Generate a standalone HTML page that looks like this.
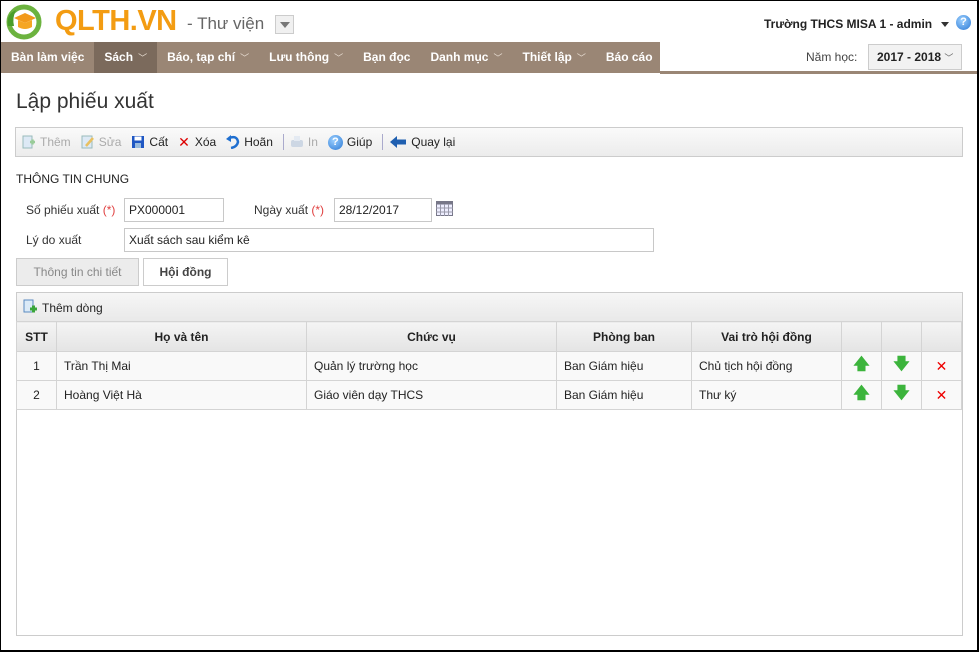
<!DOCTYPE html>
<html><head><meta charset="utf-8">
<style>
*{box-sizing:border-box;margin:0;padding:0}
body{width:979px;height:652px;overflow:hidden;font-family:"Liberation Sans","DejaVu Sans",sans-serif;font-size:12px;color:#222;background:#fff;position:relative}
.frame{position:absolute;left:0;top:0;width:979px;height:652px;border:1px solid #000;border-right:2px solid #000;border-bottom:2px solid #000;pointer-events:none}
.abs{position:absolute}
.nav{position:absolute;left:1px;top:42px;width:659px;height:31px;background:#9a8675;display:flex}
.nav div{color:#fff;font-weight:bold;font-size:12px;line-height:31px;padding:0 10px;white-space:nowrap}
.nav .act{background:#7b6a5c}
.nav span{font-weight:normal;font-size:9px;margin-left:5px;color:#e8ddd2}
.tb{position:absolute;left:15px;top:127px;width:948px;height:30px;border:1px solid #ccc;background:linear-gradient(#fafafa,#ececec);display:flex;align-items:center;padding-left:6px}
.tb .b{display:flex;align-items:center;margin-right:10px;font-size:12px}
.tb .dis{color:#aaa}
.ic{width:14px;height:14px;margin-right:4px;display:inline-block}
.sep{width:1px;height:16px;background:#aac;margin-right:6px}
input{font-family:inherit}
.inp{position:absolute;height:24px;border:1px solid #c8c8c8;padding-left:4px;line-height:22px;font-size:12px}
.lbl{position:absolute;font-size:12px;color:#333}
.req{color:#e04040}
table{border-collapse:collapse;position:absolute;left:16px;top:321px;width:946px}
td,th{border:1px solid #d4d4d4;height:29px;font-size:12px;padding:0 7px}
th{background:linear-gradient(#f4f4f4,#e4e4e4);font-weight:bold;text-align:center;height:30px}
td{background:#f9f9f9}
</style></head><body>
<!-- logo -->
<svg class="abs" style="left:4px;top:4px" width="46" height="36" viewBox="0 0 46 36">
<circle cx="20" cy="18" r="15" fill="none" stroke="#6cb33f" stroke-width="5"/>
<path d="M4 22 Q2 10 12 6 Q8 14 10 22Z" fill="#4a9e2a"/>
<path d="M10 14 L21 9 L32 14 L21 19Z" fill="#f29a1a"/>
<path d="M14 16 V23 Q21 27 28 23 V16 L21 19Z" fill="#f5a623"/>
</svg>
<div class="abs" style="left:55px;top:5px;font-size:29px;font-weight:bold;color:#f39c12;letter-spacing:-0.5px">QLTH.VN</div>
<div class="abs" style="left:187px;top:14px;font-size:17px;color:#666">- Thư viện</div>
<div class="abs" style="left:275px;top:15px;width:19px;height:19px;border:1px solid #ccc;background:#f0f0f0"><div style="margin:6px 0 0 4px;width:0;height:0;border-left:5px solid transparent;border-right:5px solid transparent;border-top:6px solid #777"></div></div>
<div class="abs" style="left:764px;top:17px;font-size:12px;font-weight:bold;color:#222">Trường THCS MISA 1 - admin</div>
<div class="abs" style="left:941px;top:22px;width:0;height:0;border-left:4px solid transparent;border-right:4px solid transparent;border-top:5px solid #333"></div>
<div class="abs" style="left:956px;top:15px;width:15px;height:15px;border-radius:50%;background:radial-gradient(circle at 40% 35%,#9cd0ff,#2a78d4);color:#fff;font-size:11px;font-weight:bold;text-align:center;line-height:15px">?</div>
<div class="nav">
<div>Bàn làm việc</div><div class="act">Sách<span>﹀</span></div><div>Báo, tạp chí<span>﹀</span></div><div>Lưu thông<span>﹀</span></div><div>Bạn đọc</div><div>Danh mục<span>﹀</span></div><div>Thiết lập<span>﹀</span></div><div>Báo cáo</div>
</div>
<div class="abs" style="left:660px;top:71px;width:318px;height:3px;background:#9a8675"></div>
<div class="abs" style="left:806px;top:50px;font-size:12px;color:#444">Năm học:</div>
<div class="abs" style="left:868px;top:44px;width:94px;height:26px;border:1px solid #ccc;background:#f2f2f2;font-weight:bold;font-size:12px;line-height:24px;padding-left:8px">2017 - 2018 <span style="font-weight:normal;font-size:9px;color:#666">﹀</span></div>

<div class="abs" style="left:16px;top:90px;font-size:21px;color:#333">Lập phiếu xuất</div>

<div class="tb">
<div class="b dis"><svg class="ic" viewBox="0 0 14 14"><rect x="1" y="1" width="9" height="12" fill="#dde9f5" stroke="#9bb"/><path d="M8 7h5M10.5 4.5v5" stroke="#9c9" stroke-width="2.5"/></svg>Thêm</div>
<div class="b dis"><svg class="ic" viewBox="0 0 14 14"><rect x="1" y="1" width="10" height="12" fill="#dde9f5" stroke="#9bb"/><path d="M5 11 L12 3" stroke="#e8c060" stroke-width="2.5"/></svg>Sửa</div>
<div class="b"><svg class="ic" viewBox="0 0 14 14"><rect x="1" y="1" width="12" height="12" fill="#1f57c3"/><rect x="3.5" y="1.5" width="7" height="4" fill="#fff"/><rect x="4" y="8" width="6" height="5" fill="#9bd"/></svg>Cất</div>
<div class="b"><span style="color:#d00;font-weight:bold;font-size:14px;margin-right:5px">✕</span>Xóa</div>
<div class="b"><svg class="ic" viewBox="0 0 14 14"><path d="M3 3 Q11 0 12 7 Q11 12 5 13" fill="none" stroke="#1f6fd0" stroke-width="2.5"/><path d="M0 4 L5 0 L5 7Z" fill="#1f6fd0"/></svg>Hoãn</div>
<div class="sep"></div>
<div class="b dis"><svg class="ic" viewBox="0 0 14 14"><rect x="1" y="5" width="12" height="7" rx="2" fill="#cdd7e4"/><rect x="4" y="1" width="6" height="5" fill="#e4eaf2"/></svg>In</div>
<div class="b"><span style="width:15px;height:15px;border-radius:50%;background:radial-gradient(circle at 40% 35%,#9cd0ff,#2a78d4);color:#fff;font-size:11px;font-weight:bold;text-align:center;line-height:15px;margin-right:4px">?</span>Giúp</div>
<div class="sep"></div>
<div class="b"><svg class="ic" style="width:18px" viewBox="0 0 18 14"><path d="M1 7 L8 1 V4.5 H17 V9.5 H8 V13Z" fill="#1f5fb0"/></svg>Quay lại</div>
</div>

<div class="abs" style="left:16px;top:172px;font-size:12px;color:#222">THÔNG TIN CHUNG</div>
<div class="lbl" style="left:26px;top:203px">Số phiếu xuất <span class="req">(*)</span></div>
<div class="inp" style="left:124px;top:198px;width:100px">PX000001</div>
<div class="lbl" style="left:254px;top:203px">Ngày xuất <span class="req">(*)</span></div>
<div class="inp" style="left:334px;top:198px;width:98px">28/12/2017</div>
<svg class="abs" style="left:436px;top:201px" width="17" height="15" viewBox="0 0 17 15"><rect x="0.5" y="0.5" width="16" height="14" fill="#eef" stroke="#778"/><rect x="0.5" y="0.5" width="16" height="3" fill="#778"/><path d="M4.5 3v12M8.5 3v12M12.5 3v12M0 7h17M0 11h17" stroke="#99a"/></svg>
<div class="lbl" style="left:26px;top:233px">Lý do xuất</div>
<div class="inp" style="left:124px;top:228px;width:530px">Xuất sách sau kiểm kê</div>

<div class="abs" style="left:16px;top:258px;width:123px;height:28px;border:1px solid #ccc;background:#ececec;color:#888;text-align:center;line-height:26px">Thông tin chi tiết</div>
<div class="abs" style="left:143px;top:258px;width:85px;height:28px;border:1px solid #ccc;background:#fff;color:#444;font-weight:bold;text-align:center;line-height:26px">Hội đồng</div>

<div class="abs" style="left:16px;top:292px;width:947px;height:344px;border:1px solid #ccc;background:#fff"></div>
<div class="abs" style="left:17px;top:293px;width:945px;height:28px;background:linear-gradient(#f6f6f6,#e9e9e9)"></div>
<svg class="abs" style="left:23px;top:299px" width="15" height="16" viewBox="0 0 15 16"><rect x="1" y="1" width="9" height="12" fill="#dbeaf7" stroke="#5a8ac0"/><path d="M7 10h7M10.5 6.5v7" stroke="#3aa53a" stroke-width="3"/></svg>
<div class="abs" style="left:42px;top:301px;font-size:12px">Thêm dòng</div>

<table>
<tr><th style="width:40px">STT</th><th style="width:250px">Họ và tên</th><th style="width:250px">Chức vụ</th><th style="width:135px">Phòng ban</th><th style="width:150px">Vai trò hội đồng</th><th style="width:40px"></th><th style="width:40px"></th><th></th></tr>
<tr><td style="text-align:center">1</td><td>Trần Thị Mai</td><td>Quản lý trường học</td><td>Ban Giám hiệu</td><td>Chủ tịch hội đồng</td><td style="text-align:center;color:#3cb43c;font-weight:bold;font-size:16px">🡅</td><td style="text-align:center;color:#3cb43c;font-weight:bold;font-size:16px">🡇</td><td style="text-align:center;color:#e00;font-weight:bold;font-size:14px">✕</td></tr>
<tr><td style="text-align:center">2</td><td>Hoàng Việt Hà</td><td>Giáo viên dạy THCS</td><td>Ban Giám hiệu</td><td>Thư ký</td><td style="text-align:center;color:#3cb43c;font-weight:bold;font-size:16px">🡅</td><td style="text-align:center;color:#3cb43c;font-weight:bold;font-size:16px">🡇</td><td style="text-align:center;color:#e00;font-weight:bold;font-size:14px">✕</td></tr>
</table>
<div class="frame"></div>
</body></html>
